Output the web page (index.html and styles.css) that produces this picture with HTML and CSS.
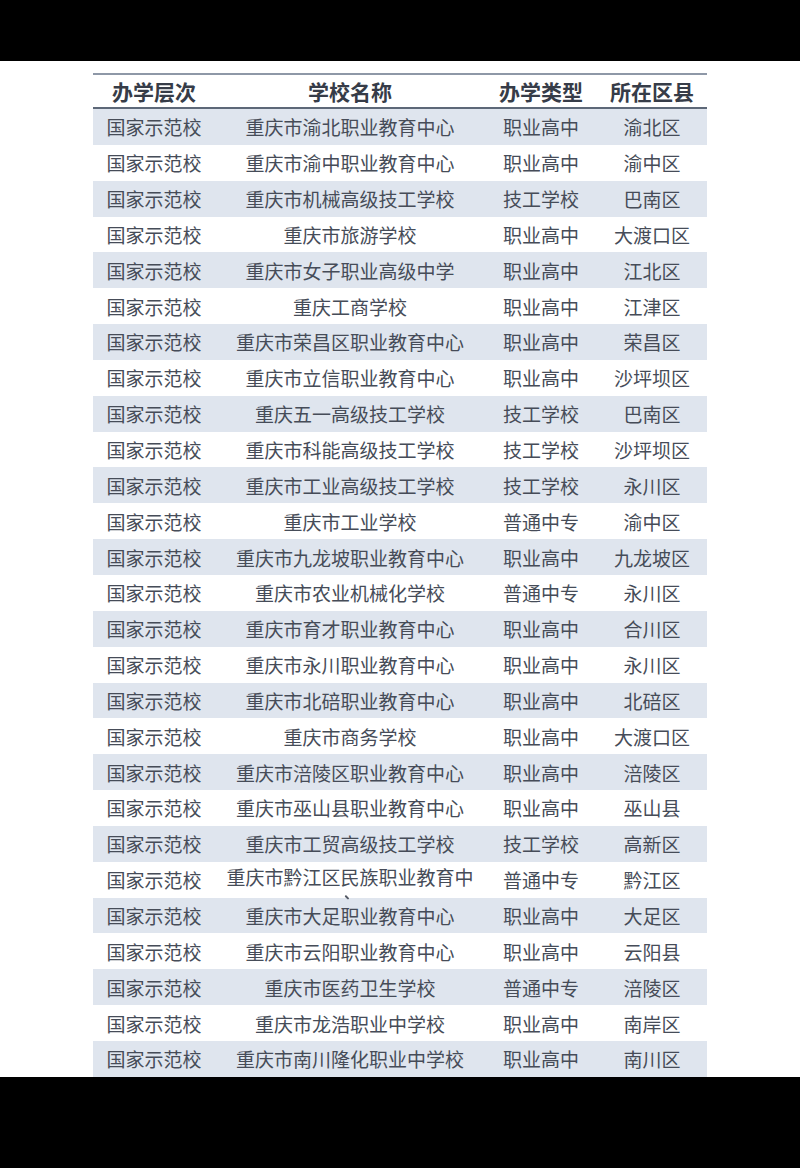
FILE: index.html
```html
<!DOCTYPE html>
<html lang="zh-CN">
<head>
<meta charset="utf-8">
<title>学校名单</title>
<link rel="stylesheet" href="styles.css">
</head>
<body>
<div class="sheet">
  <div class="table">
    <div class="row head">
      <div class="c">办学层次</div><div class="c">学校名称</div><div class="c">办学类型</div><div class="c">所在区县</div>
    </div>
    <div class="row odd"><div class="c">国家示范校</div><div class="c">重庆市渝北职业教育中心</div><div class="c">职业高中</div><div class="c">渝北区</div></div>
    <div class="row"><div class="c">国家示范校</div><div class="c">重庆市渝中职业教育中心</div><div class="c">职业高中</div><div class="c">渝中区</div></div>
    <div class="row odd"><div class="c">国家示范校</div><div class="c">重庆市机械高级技工学校</div><div class="c">技工学校</div><div class="c">巴南区</div></div>
    <div class="row"><div class="c">国家示范校</div><div class="c">重庆市旅游学校</div><div class="c">职业高中</div><div class="c">大渡口区</div></div>
    <div class="row odd"><div class="c">国家示范校</div><div class="c">重庆市女子职业高级中学</div><div class="c">职业高中</div><div class="c">江北区</div></div>
    <div class="row"><div class="c">国家示范校</div><div class="c">重庆工商学校</div><div class="c">职业高中</div><div class="c">江津区</div></div>
    <div class="row odd"><div class="c">国家示范校</div><div class="c">重庆市荣昌区职业教育中心</div><div class="c">职业高中</div><div class="c">荣昌区</div></div>
    <div class="row"><div class="c">国家示范校</div><div class="c">重庆市立信职业教育中心</div><div class="c">职业高中</div><div class="c">沙坪坝区</div></div>
    <div class="row odd"><div class="c">国家示范校</div><div class="c">重庆五一高级技工学校</div><div class="c">技工学校</div><div class="c">巴南区</div></div>
    <div class="row"><div class="c">国家示范校</div><div class="c">重庆市科能高级技工学校</div><div class="c">技工学校</div><div class="c">沙坪坝区</div></div>
    <div class="row odd"><div class="c">国家示范校</div><div class="c">重庆市工业高级技工学校</div><div class="c">技工学校</div><div class="c">永川区</div></div>
    <div class="row"><div class="c">国家示范校</div><div class="c">重庆市工业学校</div><div class="c">普通中专</div><div class="c">渝中区</div></div>
    <div class="row odd"><div class="c">国家示范校</div><div class="c">重庆市九龙坡职业教育中心</div><div class="c">职业高中</div><div class="c">九龙坡区</div></div>
    <div class="row"><div class="c">国家示范校</div><div class="c">重庆市农业机械化学校</div><div class="c">普通中专</div><div class="c">永川区</div></div>
    <div class="row odd"><div class="c">国家示范校</div><div class="c">重庆市育才职业教育中心</div><div class="c">职业高中</div><div class="c">合川区</div></div>
    <div class="row"><div class="c">国家示范校</div><div class="c">重庆市永川职业教育中心</div><div class="c">职业高中</div><div class="c">永川区</div></div>
    <div class="row odd"><div class="c">国家示范校</div><div class="c">重庆市北碚职业教育中心</div><div class="c">职业高中</div><div class="c">北碚区</div></div>
    <div class="row"><div class="c">国家示范校</div><div class="c">重庆市商务学校</div><div class="c">职业高中</div><div class="c">大渡口区</div></div>
    <div class="row odd"><div class="c">国家示范校</div><div class="c">重庆市涪陵区职业教育中心</div><div class="c">职业高中</div><div class="c">涪陵区</div></div>
    <div class="row"><div class="c">国家示范校</div><div class="c">重庆市巫山县职业教育中心</div><div class="c">职业高中</div><div class="c">巫山县</div></div>
    <div class="row odd"><div class="c">国家示范校</div><div class="c">重庆市工贸高级技工学校</div><div class="c">技工学校</div><div class="c">高新区</div></div>
    <div class="row"><div class="c">国家示范校</div><div class="c raised">重庆市黔江区民族职业教育中<span class="tick"></span></div><div class="c">普通中专</div><div class="c">黔江区</div></div>
    <div class="row odd"><div class="c">国家示范校</div><div class="c">重庆市大足职业教育中心</div><div class="c">职业高中</div><div class="c">大足区</div></div>
    <div class="row"><div class="c">国家示范校</div><div class="c">重庆市云阳职业教育中心</div><div class="c">职业高中</div><div class="c">云阳县</div></div>
    <div class="row odd"><div class="c">国家示范校</div><div class="c">重庆市医药卫生学校</div><div class="c">普通中专</div><div class="c">涪陵区</div></div>
    <div class="row"><div class="c">国家示范校</div><div class="c">重庆市龙浩职业中学校</div><div class="c">职业高中</div><div class="c">南岸区</div></div>
    <div class="row odd"><div class="c">国家示范校</div><div class="c">重庆市南川隆化职业中学校</div><div class="c">职业高中</div><div class="c">南川区</div></div>
  </div>
</div>
</body>
</html>
```

FILE: styles.css
```css
html, body {
  margin: 0;
  padding: 0;
  background: #000;
}
body {
  height: 1168px;
  font-family: "Noto Sans CJK SC", "Noto Sans", sans-serif;
}
.sheet {
  margin-top: 61px;
  height: 1016px;
  background: #fff;
  padding: 12px 0 0 93px;
  box-sizing: border-box;
}
.table {
  width: 614px;
  border-top: 2px solid #8e98a7;
}
.row {
  display: grid;
  grid-template-columns: 122px 270px 112px 110px;
  height: 35.85px;
  align-items: center;
  font-size: 19px;
  color: #464c58;
  line-height: 1;
}
.row.odd {
  background: #dfe5ee;
}
.row.head {
  height: 32px;
  font-size: 21px;
  font-weight: 700;
  color: #363c48;
  border-bottom: 2px solid #5d6878;
}
.c {
  text-align: center;
  white-space: nowrap;
}
.raised {
  position: relative;
  top: -3px;
}
.tick {
  position: absolute;
  left: 131px;
  top: 28px;
  width: 1.5px;
  height: 5px;
  background: #555b66;
  border-radius: 1px;
  transform: rotate(-45deg);
}
```
